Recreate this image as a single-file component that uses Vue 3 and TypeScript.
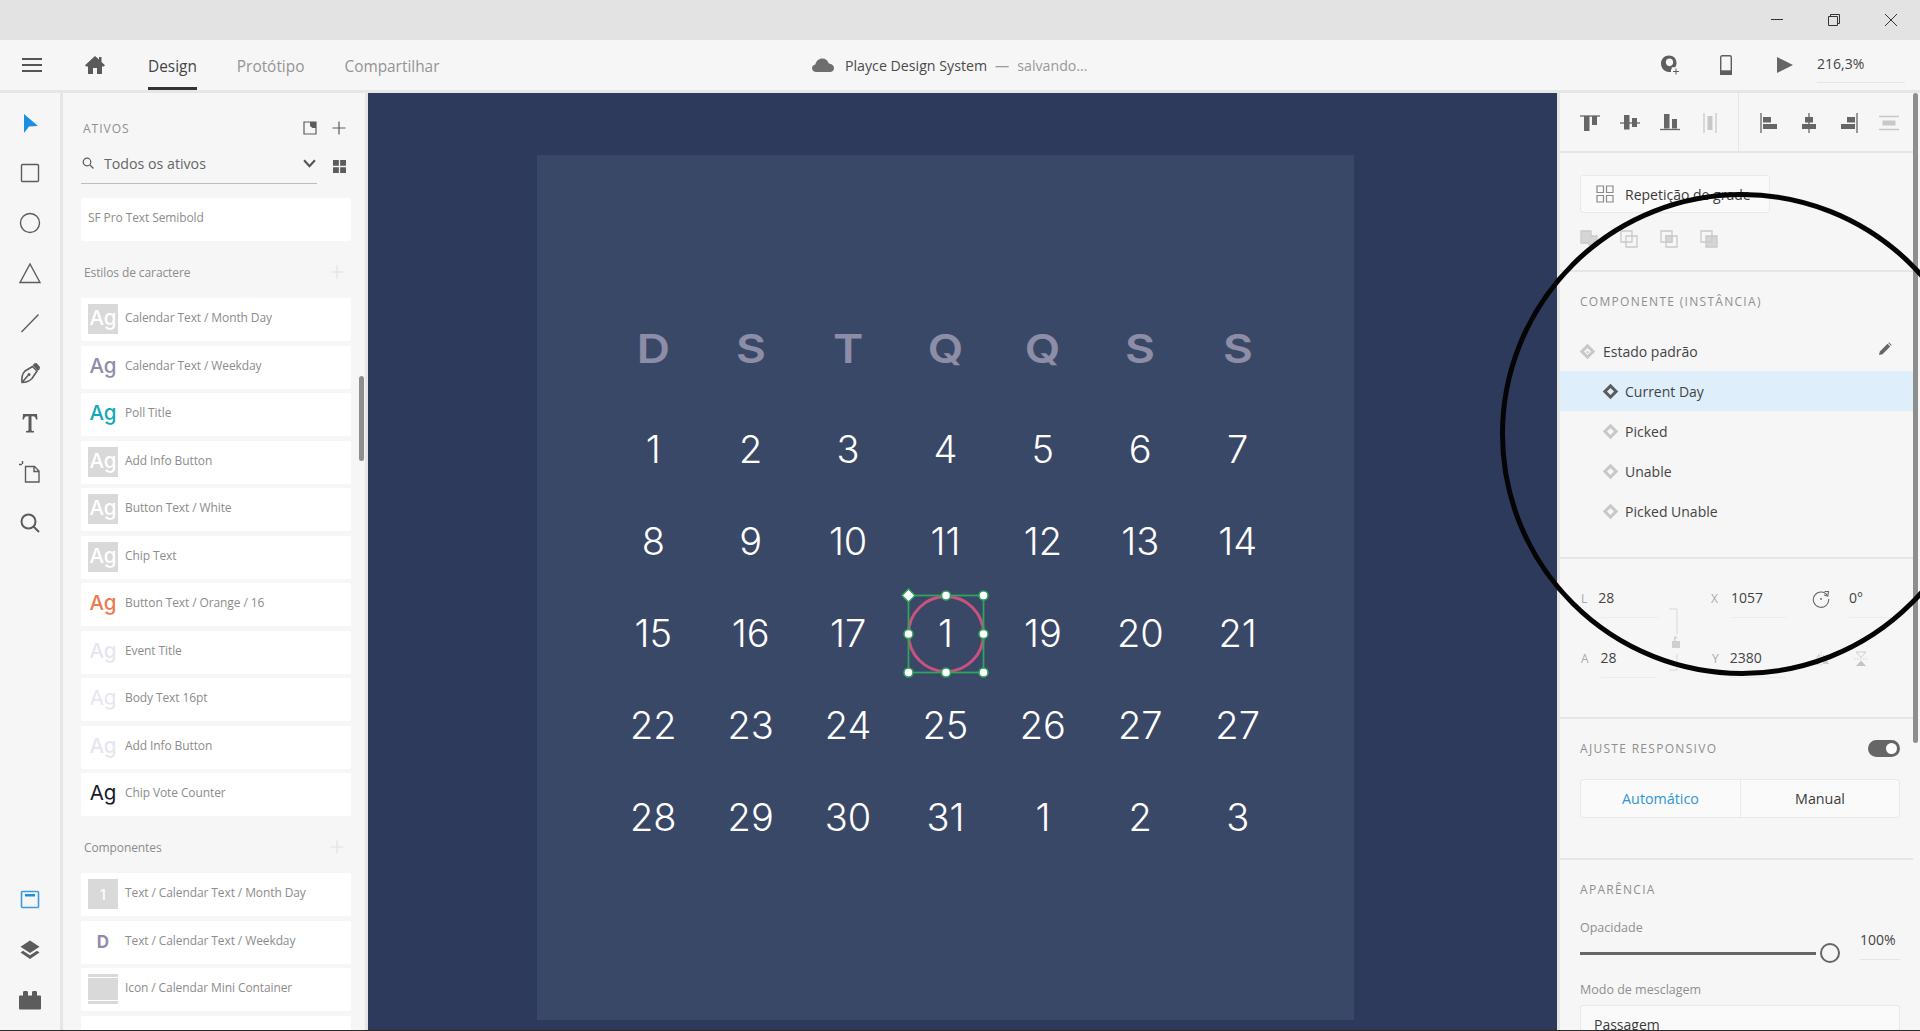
<template>
  <div class="app">
    <div class="titlebar">
      <svg class="win" viewBox="0 0 14 14"><path d="M1 6.500H13" /></svg>
      <svg class="win" viewBox="0 0 14 14"><path d="M1.500 3.500H10.500V12.500H1.500ZM3.500 3.500V1.500H12.500V10.500H10.500" /></svg>
      <svg class="win" viewBox="0 0 14 14"><path d="M1 1L13 13M13 1L1 13" /></svg>
    </div>

    <header class="toolbar">
      <div class="toolbar-left">
        <svg class="menu-icon" viewBox="0 0 20 16"><path d="M0 2H20M0 8H20M0 14H20" /></svg>
        <svg class="home-icon" viewBox="0 0 20 20"><path d="M10 1L14 4.600V2H16.500V6.900L20 10.200L18.700 11.400H17V19H12V13H8V19H3V11.400H1.300L0 10.200Z" /></svg>
        <nav class="tabs">
          <span class="tab tab-active">Design</span>
          <span class="tab">Protótipo</span>
          <span class="tab">Compartilhar</span>
        </nav>
      </div>
      <div class="doc">
        <svg class="cloud" viewBox="0 0 22 14"><path d="M4.500 14C2 14 0 12.400 0 10.200C0 8.300 1.400 6.800 3.300 6.500C4.200 2.800 7 0.500 10.400 0.500C13.500 0.500 16 2.500 16.800 5.500C19.800 5.700 22 7.600 22 10.200C22 12.400 20.300 14 18 14Z" /></svg>
        <span class="doc-name">Playce Design System</span>
        <span class="doc-dash">—</span>
        <span class="doc-state">salvando...</span>
      </div>
      <div class="toolbar-right">
        <svg class="user-icon" viewBox="0 0 20 20"><path fill-rule="evenodd" d="M9 0.500C13.500 0.500 16.500 3.500 16.500 8C16.500 9.500 16 11 15.200 12.200H11.800V13.500C11 14.300 10.800 15.500 11 17H9C4.500 17 1 13 1 8.500C1 4 4.500 0.500 9 0.500ZM9.500 3.500C7.300 3.500 5.800 5.200 5.800 7.300C5.800 9.500 7.300 11.200 9.500 11.200C11.700 11.200 13.200 9.500 13.200 7.300C13.200 5.200 11.700 3.500 9.500 3.500Z" /><path class="plus" d="M16 13.500V19.500M13 16.500H19" /></svg>
        <svg class="phone-icon" viewBox="0 0 12 20"><rect x="0.700" y="0.700" width="10.600" height="18.600" rx="1.500" /><rect class="phone-bottom" x="0.700" y="16" width="10.600" height="3.300" /></svg>
        <svg class="play-icon" viewBox="0 0 16 16"><path d="M0 0L16 8L0 16Z" /></svg>
        <span class="zoom-value">216,3%</span>
      </div>
    </header>

    <main class="workspace">
      <aside class="rail">
        <div class="rail-group">
          <span class="rail-item"><svg viewBox="0 0 24 24"><path class="fill-blue" d="M6 3L20 15L11 15.600L6 22Z" /></svg></span>
          <span class="rail-item"><svg viewBox="0 0 24 24"><rect class="line" x="3.500" y="3.500" width="17" height="17" rx="1" /></svg></span>
          <span class="rail-item"><svg viewBox="0 0 24 24"><circle class="line" cx="12" cy="12" r="9.500" /></svg></span>
          <span class="rail-item"><svg viewBox="0 0 24 24"><path class="line" d="M12 3L22 21.500H2Z" /></svg></span>
          <span class="rail-item"><svg viewBox="0 0 24 24"><path class="line" d="M3.500 21L20.500 3.500" /></svg></span>
          <span class="rail-item"><svg viewBox="0 0 24 24"><path class="line thick" d="M4 21.500C3.500 17 4.500 12.500 7 10L14.500 5.500L19 10L14 17.500C11.500 20 8 21.500 4 21.500ZM4 21.500L10 14.500" /><path class="fill-dark" d="M16 2.500L18.500 2L22 6L21.500 8.500L19.800 9.800L14.800 4.300Z" /><circle class="fill-dark" cx="11" cy="13.500" r="1.500" /></svg></span>
          <span class="rail-item"><svg viewBox="0 0 24 24"><path class="fill-dark" d="M5 3H19L19.500 8.500H18C17.500 6 17 5.300 14.800 5.300H13.500V18.500C13.500 19.500 14 20 16 20V21.500H8V20C10 20 10.500 19.500 10.500 18.500V5.300H9.200C7 5.300 6.500 6 6 8.500H4.500Z" /></svg></span>
          <span class="rail-item"><svg viewBox="0 0 24 24"><path class="line" d="M7.500 5.500H16.500L21 10V21H7.500Z M16 6V10.500H20.500" /><path class="line" d="M1 3.500H4M4.500 0V3" /></svg></span>
          <span class="rail-item"><svg viewBox="0 0 24 24"><circle class="line wide" cx="10.500" cy="10.500" r="7" /><path class="line wide" d="M15.500 15.500L21 21" /></svg></span>
        </div>
        <div class="rail-group rail-bottom">
          <span class="rail-item"><svg viewBox="0 0 24 24"><rect class="line-blue" x="3.500" y="3.500" width="17" height="16" rx="1" /><rect class="fill-blue" x="7" y="6" width="10" height="2.500" /></svg></span>
          <span class="rail-item"><svg viewBox="0 0 24 24"><path class="fill-dark" d="M12 2.500L21.500 8.800L12 15L2.500 8.800Z" /><path class="fill-dark" d="M5 12.700L12 17.300L19 12.700L21.500 14.500L12 21L2.500 14.500Z" /></svg></span>
          <span class="rail-item"><svg viewBox="0 0 24 24"><path class="fill-dark" d="M1 8.500C1 7.800 1.500 7.500 2 7.500H5V4.500C5 3.500 5.500 3 6.500 3H8.500C9.500 3 10 3.500 10 4.500V7.500H14V4.500C14 3.500 14.500 3 15.500 3H17.500C18.500 3 19 3.500 19 4.500V7.500H22C22.500 7.500 23 7.800 23 8.500V20.500C23 21 22.500 21.500 22 21.500H2C1.500 21.500 1 21 1 20.500Z" /></svg></span>
        </div>
      </aside>

      <section class="assets">
        <div class="assets-head">
          <span class="caps assets-title">ATIVOS</span>
          <span class="head-icons">
            <svg viewBox="0 0 14 14"><path class="line-sm" d="M1 1H13V13H1Z" /><path class="fill-dark" d="M7 1H13V7H9.500L7 5Z" /></svg>
            <svg viewBox="0 0 14 14"><path class="line-sm" d="M7 0.500V13.500M0.500 7H13.500" /></svg>
          </span>
        </div>
        <div class="assets-search">
          <div class="search-box">
            <svg class="search-glass" viewBox="0 0 12 12"><circle class="line-sm" cx="5" cy="5" r="3.800" /><path class="line-sm" d="M8 8L11.500 11.500" /></svg>
            <span class="search-text">Todos os ativos</span>
            <svg class="chevron" viewBox="0 0 12 8"><path d="M1 1L6 6.500L11 1" /></svg>
          </div>
          <svg class="grid-icon" viewBox="0 0 12 12"><path d="M0 0H5.400V5.400H0ZM6.600 0H12V5.400H6.600ZM0 6.600H5.400V12H0ZM6.600 6.600H12V12H6.600Z" /></svg>
        </div>
        <div class="card card-font">SF Pro Text Semibold</div>

        <div class="group-label">
          <span>Estilos de caractere</span>
          <svg viewBox="0 0 14 14"><path d="M7 0.500V13.500M0.500 7H13.500" /></svg>
        </div>
        <div class="card-list">
          <div v-for="item in charStyles" :key="item.name + item.thumb" class="card">
            <span class="thumb" :class="item.thumb">Ag</span>
            <span class="card-name">{{ item.name }}</span>
          </div>
        </div>

        <div class="group-label">
          <span>Componentes</span>
          <svg viewBox="0 0 14 14"><path d="M7 0.500V13.500M0.500 7H13.500" /></svg>
        </div>
        <div class="card-list">
          <div class="card">
            <span class="thumb boxed one">1</span>
            <span class="card-name">Text / Calendar Text / Month Day</span>
          </div>
          <div class="card">
            <span class="thumb letter">D</span>
            <span class="card-name">Text / Calendar Text / Weekday</span>
          </div>
          <div class="card">
            <span class="thumb mini"></span>
            <span class="card-name">Icon / Calendar Mini Container</span>
          </div>
          <div class="card"></div>
        </div>
        <span class="scroll scroll-left"></span>
      </section>

      <section class="canvas">
        <div class="artboard">
          <div class="calendar">
            <span v-for="(d, i) in weekdays" :key="'w' + i" class="cell weekday"><b>{{ d }}</b></span>
            <span v-for="(d, i) in days" :key="'d' + i" class="cell day">
              {{ d }}
              <svg v-if="i === 17" class="selection" viewBox="0 0 100 100">
                <circle class="sel-circle" cx="50" cy="50" r="37.500" />
                <rect class="sel-box" x="12.500" y="11.500" width="75" height="77" />
                <path class="sel-handle" d="M12.500 5L19 11.500L12.500 18L6 11.500Z" />
                <circle v-for="(h, k) in handles" :key="k" class="sel-handle" :cx="h[0]" :cy="h[1]" r="4.500" />
              </svg>
            </span>
          </div>
        </div>
      </section>

      <aside class="props">
        <div class="section align-bar">
          <div class="align-group">
            <svg viewBox="0 0 20 20"><path class="stroke" d="M0 3H20" /><path class="solid" d="M4 3H9.500V18H4ZM12 3H17V12H12Z" /></svg>
            <svg viewBox="0 0 20 20"><path class="stroke" d="M0 10H20" /><path class="solid" d="M4 2H9.500V16.500H4ZM12 5H17V14H12Z" /></svg>
            <svg viewBox="0 0 20 20"><path class="stroke" d="M0 16.500H20" /><path class="solid" d="M4 1H9.500V15.500H4ZM12 6H17V15.500H12Z" /></svg>
            <svg viewBox="0 0 20 20"><path class="stroke dim" d="M4 0V20M16 0V20" /><path class="solid dim" d="M7.500 3H12.500V17H7.500Z" /></svg>
          </div>
          <div class="align-group align-right">
            <svg viewBox="0 0 20 20"><path class="stroke" d="M2 0V20" /><path class="solid" d="M4 4H12V9.500H4ZM4 11H18V16H4Z" /></svg>
            <svg viewBox="0 0 20 20"><path class="stroke" d="M10 0V20" /><path class="solid" d="M6 4H14V9.500H6ZM3 11H17V16H3Z" /></svg>
            <svg viewBox="0 0 20 20"><path class="stroke" d="M18 0V20" /><path class="solid" d="M8 4H16V9.500H8ZM2 11H16V16H2Z" /></svg>
            <svg viewBox="0 0 20 20"><path class="stroke dim" d="M0 3.500H20M0 16.500H20" /><path class="solid dim" d="M3.500 7.500H16.500V12.500H3.500Z" /></svg>
          </div>
        </div>

        <div class="section repeat">
          <div class="repeat-btn">
            <svg viewBox="0 0 18 18"><path d="M1 1H7.500V7.500H1ZM10.500 1H17V7.500H10.500ZM1 10.500H7.500V17H1ZM10.500 10.500H17V17H10.500Z" /></svg>
            <span>Repetição de grade</span>
          </div>
          <div class="bool-row">
            <svg viewBox="0 0 18 18"><path class="bool-fill" d="M1 1H11V6H17V13L11 17L8 13H1Z" /></svg>
            <svg viewBox="0 0 18 18"><path d="M1 1H12V12H1Z" /><path d="M6 6H17V17H6Z" /></svg>
            <svg viewBox="0 0 18 18"><path d="M1 1H12V12H1Z" /><path d="M6 6H17V17H6Z" /><path class="bool-fill" d="M6 6H12V12H6Z" /></svg>
            <svg viewBox="0 0 18 18"><path class="bool-fill" d="M6 6H17V17H6Z" /><path d="M1 1H12V12H1Z" /></svg>
          </div>
        </div>

        <div class="section component">
          <div class="caps section-title">COMPONENTE (INSTÂNCIA)</div>
          <div class="states">
            <div v-for="(s, i) in states" :key="s" class="state" :class="{ 'state-root': i === 0, 'state-current': i === 1 }">
              <span class="state-diamond"></span>
              <span>{{ s }}</span>
              <svg v-if="i === 0" class="pencil" viewBox="0 0 14 14"><path d="M1 13L1.800 9.500L9.500 1.800L12.200 4.500L4.500 12.200Z M10.300 1L11 0.300L13.700 3L13 3.700Z" /></svg>
            </div>
          </div>
        </div>

        <div class="section transform">
          <div class="field field-w"><span class="f-label">L</span><span class="f-value">28</span></div>
          <div class="field field-x"><span class="f-label">X</span><span class="f-value">1057</span></div>
          <div class="field-rot">
            <svg viewBox="0 0 18 18"><path d="M15.500 5.500A7.700 7.700 0 1 0 16.700 9" /><path d="M12.500 1.500L16.500 1.500L15.800 6L12 5" /><circle class="dot" cx="9" cy="9" r="0.900" /></svg>
            <span class="f-value">0°</span>
          </div>
          <div class="field field-h"><span class="f-label">A</span><span class="f-value">28</span></div>
          <div class="field field-y"><span class="f-label">Y</span><span class="f-value">2380</span></div>
          <div class="field-flip">
            <svg viewBox="0 0 18 18"><path d="M9 2V16" class="dash" /><path d="M7 4V14L1 14Z" class="flip-a" /><path d="M11 4V14L17 14Z" class="flip-b" /></svg>
            <svg viewBox="0 0 18 18"><path d="M2 9H16" class="dash" /><path d="M4 2H14L9 7.500Z" class="flip-a" /><path d="M4 16H14L9 10.500Z" class="flip-c" /></svg>
          </div>
          <svg class="link" viewBox="0 0 12 64"><path d="M1 1H9V26M9 46V62H1" /><path class="lock" d="M4 33H12V40H4ZM6 33V30C6 28 9 28 9.500 29.500L8 30.500C8 30 7.500 30 7.500 31V33Z" /></svg>
        </div>

        <div class="section responsive">
          <div class="section-head">
            <span class="caps">AJUSTE RESPONSIVO</span>
            <span class="toggle"><i></i></span>
          </div>
          <div class="segment">
            <span class="seg-on">Automático</span>
            <span>Manual</span>
          </div>
        </div>

        <div class="section appearance">
          <div class="caps section-title">APARÊNCIA</div>
          <div class="opacity">
            <span class="sub-label">Opacidade</span>
            <span class="opacity-value">100%</span>
            <span class="slider"><i class="slider-track"></i><i class="slider-knob"></i></span>
          </div>
          <div class="sub-label blend-label">Modo de mesclagem</div>
          <div class="select">Passagem</div>
        </div>
        <span class="scroll scroll-right"></span>
      </aside>
    </main>
    <div class="edge"></div>

    <svg class="annotation" viewBox="0 0 484 484"><circle cx="242" cy="242" r="239.500" /></svg>
  </div>
</template>

<script setup lang="ts">
interface CharStyle {
  name: string
  thumb: string
}

const charStyles: CharStyle[] = [
  { name: 'Calendar Text / Month Day', thumb: 'boxed' },
  { name: 'Calendar Text / Weekday', thumb: 'purple' },
  { name: 'Poll Title', thumb: 'teal' },
  { name: 'Add Info Button', thumb: 'boxed' },
  { name: 'Button Text / White', thumb: 'boxed' },
  { name: 'Chip Text', thumb: 'boxed' },
  { name: 'Button Text / Orange / 16', thumb: 'orange' },
  { name: 'Event Title', thumb: 'pale' },
  { name: 'Body Text 16pt', thumb: 'pale thin' },
  { name: 'Add Info Button', thumb: 'pale' },
  { name: 'Chip Vote Counter', thumb: 'ink' },
]

const weekdays = ['D', 'S', 'T', 'Q', 'Q', 'S', 'S']

const days: number[] = [
  1, 2, 3, 4, 5, 6, 7,
  8, 9, 10, 11, 12, 13, 14,
  15, 16, 17, 1, 19, 20, 21,
  22, 23, 24, 25, 26, 27, 27,
  28, 29, 30, 31, 1, 2, 3,
]

const handles: [number, number][] = [
  [50, 11.5], [87.5, 11.5],
  [12.5, 50], [87.5, 50],
  [12.5, 88.5], [50, 88.5], [87.5, 88.5],
]

const states = ['Estado padrão', 'Current Day', 'Picked', 'Unable', 'Picked Unable']
</script>

<style>
html, body {
  margin: 0;
  overflow: hidden;
}
</style>

<style scoped>
.app {
  position: relative;
  display: flex;
  flex-direction: column;
  width: 1920px;
  height: 1031px;
  overflow: hidden;
  background: #f6f6f6;
  font-family: "Open Sans", "Noto Sans", sans-serif;
  color: #555;
}

/* title bar */
.titlebar {
  flex: 0 0 40px;
  display: flex;
  justify-content: flex-end;
  align-items: center;
  gap: 43px;
  padding-right: 22px;
  background: #e3e3e3;
}
.win {
  width: 14px;
  height: 14px;
  fill: none;
  stroke: #333;
  stroke-width: 1;
}

/* top toolbar */
.toolbar {
  flex: 0 0 53px;
  box-sizing: border-box;
  display: flex;
  align-items: center;
  background: #f6f6f6;
  border-bottom: 3px solid #e6e6e6;
}
.toolbar-left {
  flex: 0 0 812px;
  display: flex;
  align-items: center;
  height: 50px;
}
.menu-icon {
  width: 20px;
  height: 16px;
  margin-left: 22px;
  fill: none;
  stroke: #555;
  stroke-width: 2.2;
}
.home-icon {
  width: 20px;
  height: 20px;
  margin-left: 43px;
  fill: #5a5a5a;
}
.tabs {
  display: flex;
  align-self: stretch;
  gap: 40px;
  margin-left: 43px;
}
.tab {
  height: 47px;
  line-height: 54px;
  font-size: 15.400px;
  color: #949494;
}
.tab-active {
  color: #444;
  border-bottom: 3px solid #333;
}
.doc {
  flex: 1;
  display: flex;
  align-items: center;
  font-size: 14.200px;
}
.cloud {
  width: 22px;
  height: 14px;
  margin-right: 11px;
  fill: #6e6e6e;
}
.doc-name {
  color: #4a4a4a;
}
.doc-dash {
  margin: 0 8px;
  color: #999;
}
.doc-state {
  color: #999;
}
.toolbar-right {
  flex: 0 0 260px;
  display: flex;
  align-items: center;
}
.user-icon {
  width: 20px;
  height: 20px;
  fill: #5e5e5e;
}
.user-icon .plus {
  fill: none;
  stroke: #5e5e5e;
  stroke-width: 1;
}
.phone-icon {
  width: 12px;
  height: 20px;
  margin-left: 40px;
  fill: none;
  stroke: #5e5e5e;
  stroke-width: 1.4;
}
.phone-bottom {
  fill: #5e5e5e;
}
.play-icon {
  width: 16px;
  height: 16px;
  margin-left: 45px;
  fill: #666;
}
.zoom-value {
  width: 88px;
  margin-left: 24px;
  padding-bottom: 10px;
  margin-top: 8px;
  font-size: 14px;
  line-height: 17px;
  color: #444;
  border-bottom: 1px solid #e6e6e6;
}

.workspace {
  flex: 1;
  display: flex;
  min-height: 0;
}

/* left tools */
.rail {
  flex: 0 0 60px;
  display: flex;
  flex-direction: column;
  justify-content: space-between;
  padding: 5px 0 5px;
  background: #f6f6f6;
  border-right: 3px solid #e5e5e5;
}
.rail-item {
  display: flex;
  align-items: center;
  justify-content: center;
  height: 50px;
}
.rail-item svg {
  width: 24px;
  height: 24px;
}
.fill-blue {
  fill: #1b8fe0;
}
.fill-dark {
  fill: #5c5c5c;
}
.line {
  fill: none;
  stroke: #5c5c5c;
  stroke-width: 1.4;
}
.line.thick {
  stroke-width: 1.6;
}
.line.wide {
  stroke-width: 2;
}
.line-blue {
  fill: none;
  stroke: #3d9bdc;
  stroke-width: 1.6;
}
.line-sm {
  fill: none;
  stroke: #5c5c5c;
  stroke-width: 1.2;
}

/* assets panel */
.assets {
  position: relative;
  flex: 0 0 305px;
  box-sizing: border-box;
  padding-left: 18px;
  overflow: hidden;
  background: #f6f6f6;
  border-right: 3px solid #e5e5e5;
}
.assets-head {
  display: flex;
  align-items: center;
  justify-content: space-between;
  width: 270px;
  height: 20px;
  margin-top: 25px;
  padding-left: 2px;
  box-sizing: border-box;
}
.caps {
  font-size: 12px;
  letter-spacing: 1.3px;
  color: #8f8f8f;
}
.assets-title {
  letter-spacing: 1px;
}
.head-icons {
  display: flex;
  gap: 15px;
  margin-right: 5px;
}
.head-icons svg {
  width: 14px;
  height: 14px;
}
.assets-search {
  display: flex;
  align-items: flex-start;
  margin-top: 10px;
}
.search-box {
  box-sizing: border-box;
  display: flex;
  align-items: center;
  width: 236px;
  height: 36px;
  padding: 0 1px 5px 1px;
  border-bottom: 1px solid #bdbdbd;
}
.search-glass {
  width: 12px;
  height: 12px;
}
.search-text {
  flex: 1;
  margin-left: 10px;
  font-size: 14.200px;
  color: #666;
}
.chevron {
  width: 13px;
  height: 9px;
  fill: none;
  stroke: #555;
  stroke-width: 2;
}
.grid-icon {
  width: 13px;
  height: 13px;
  margin: 12px 0 0 16px;
  fill: #5c5c5c;
}
.card {
  box-sizing: border-box;
  display: flex;
  align-items: flex-start;
  flex: 0 0 43px;
  width: 270px;
  height: 43px;
  padding: 6px 0 0 7px;
  border-radius: 2px;
  background: #fff;
}
.card-font {
  margin-top: 14px;
  font-size: 12px;
  line-height: 28px;
  letter-spacing: -0.1px;
  color: #8c8c8c;
}
.group-label {
  display: flex;
  align-items: center;
  justify-content: space-between;
  box-sizing: border-box;
  width: 270px;
  height: 57px;
  padding: 21px 7px 16px 3px;
  font-size: 12px;
  letter-spacing: -0.1px;
  color: #8c8c8c;
}
.group-label svg {
  width: 14px;
  height: 14px;
  fill: none;
  stroke: #e2e2e2;
  stroke-width: 1.2;
}
.card-list {
  display: flex;
  flex-direction: column;
  gap: 4.500px;
}
.thumb {
  flex: 0 0 30px;
  box-sizing: border-box;
  width: 30px;
  height: 30px;
  padding-bottom: 3px;
  display: flex;
  align-items: center;
  justify-content: center;
  font-family: Inter, "Open Sans", sans-serif;
  font-size: 20.500px;
  font-weight: 500;
}
.boxed {
  background: #d9d9d9;
  color: #fff;
}
.boxed.one {
  padding-bottom: 0;
  font-size: 14px;
}
.purple,
.letter {
  color: #8f8ca8;
}
.letter {
  padding-bottom: 0;
  font-weight: 700;
  font-size: 17px;
}
.teal {
  color: #12a8ba;
}
.orange {
  color: #ee7a50;
}
.pale {
  color: #e6e6f2;
}
.pale.thin {
  font-weight: 400;
}
.ink {
  color: #15192e;
  font-weight: 400;
}
.mini {
  background: linear-gradient(#d9d9d9 0 3px, #fff 3px 4px, #d9d9d9 4px 26px, #fff 26px 27px, #d9d9d9 27px);
}
.card-name {
  margin-left: 7px;
  font-size: 12px;
  line-height: 28px;
  letter-spacing: -0.1px;
  color: #8c8c8c;
}
.scroll {
  position: absolute;
  width: 5px;
  border-radius: 3px;
  background: #8e8e8e;
}
.scroll-left {
  top: 283px;
  left: 296px;
  height: 85px;
}
.scroll-right {
  top: 0;
  right: 2px;
  height: 650px;
}

/* canvas */
.canvas {
  flex: 1;
  min-width: 0;
  padding: 62px 0 0 169px;
  background: #2d3a5c;
  overflow: hidden;
}
.artboard {
  box-sizing: border-box;
  width: 817px;
  height: 865px;
  padding-top: 147px;
  background: #3a4868;
}
.calendar {
  display: grid;
  grid-template-columns: repeat(7, 97.400px);
  grid-template-rows: 101px;
  grid-auto-rows: 92px;
  justify-content: center;
}
.cell {
  position: relative;
  display: flex;
  align-items: center;
  justify-content: center;
  font-family: Inter, "Open Sans", sans-serif;
}
.weekday {
  padding-bottom: 9px;
  font-size: 40px;
  color: #8e8da8;
}
.weekday b {
  font-weight: 600;
  transform: scaleX(1.15);
}
.day {
  font-size: 38px;
  font-weight: 300;
  color: #fff;
}
.selection {
  position: absolute;
  left: -1.300px;
  top: -3px;
  width: 100px;
  height: 100px;
  overflow: visible;
}
.sel-circle {
  fill: none;
  stroke: #c9527e;
  stroke-width: 3;
}
.sel-box {
  fill: none;
  stroke: #2fa45a;
  stroke-width: 1.800;
}
.sel-handle {
  fill: #fff;
  stroke: #2fa45a;
  stroke-width: 1.500;
}

/* right panel */
.props {
  position: relative;
  flex: 0 0 363px;
  box-sizing: border-box;
  background: #f6f6f6;
  border-left: 3px solid #e5e5e5;
}
.section {
  box-sizing: border-box;
  width: 353px;
  border-bottom: 2px solid #e6e6e6;
}
.align-bar {
  display: flex;
  height: 60px;
}
.align-group {
  display: flex;
  align-items: center;
  gap: 20px;
  padding: 2px 0 0 20px;
  width: 179px;
  box-sizing: border-box;
  border-right: 1px solid #e6e6e6;
}
.align-right {
  border-right: none;
  width: auto;
}
.align-group svg {
  width: 20px;
  height: 20px;
}
.stroke {
  fill: none;
  stroke: #666;
  stroke-width: 1.300;
}
.solid {
  fill: #666;
}
.stroke.dim {
  stroke: #c8c8c8;
}
.solid.dim {
  fill: #c8c8c8;
}
.repeat {
  height: 119px;
  padding: 22px 0 0 20px;
}
.repeat-btn {
  box-sizing: border-box;
  display: flex;
  align-items: center;
  width: 190px;
  height: 38px;
  padding-left: 15px;
  border: 1px solid #e9e9e9;
  border-radius: 3px;
  background: #fafafa;
  font-size: 14px;
  color: #3a3a3a;
}
.repeat-btn svg {
  width: 18px;
  height: 18px;
  margin-right: 11px;
  fill: none;
  stroke: #8a8a8a;
  stroke-width: 1.200;
}
.bool-row {
  display: flex;
  gap: 22px;
  margin-top: 17px;
}
.bool-row svg {
  width: 18px;
  height: 18px;
  fill: none;
  stroke: #c9c9c9;
  stroke-width: 1.300;
}
.bool-fill {
  fill: #d6d6d6;
}
.component {
  height: 287px;
}
.section-title {
  padding: 20px 0 0 20px;
  line-height: 20px;
}
.states {
  margin-top: 19px;
}
.state {
  display: flex;
  align-items: center;
  height: 40px;
  padding-left: 45px;
  font-size: 14px;
  color: #444;
}
.state-root {
  padding-left: 22px;
}
.state-current {
  background: #deeefa;
}
.state-diamond {
  position: relative;
  flex: none;
  box-sizing: border-box;
  width: 11px;
  height: 11px;
  margin-right: 9px;
  border: 3px solid #c8c8c8;
  transform: rotate(45deg);
}
.state-root .state-diamond {
  margin-right: 10px;
}
.state-root .state-diamond::after {
  content: '';
  position: absolute;
  inset: 1.500px;
  background: #c8c8c8;
}
.state-current .state-diamond {
  border-color: #5c5c5c;
}
.pencil {
  width: 14px;
  height: 14px;
  margin-left: auto;
  margin-right: 21px;
  margin-top: -4px;
  fill: #666;
}
.transform {
  position: relative;
  display: grid;
  grid-template-columns: 130px 101px 1fr;
  grid-template-rows: 39px 39px;
  row-gap: 21px;
  align-content: start;
  height: 160px;
  padding: 20px 0 0 21px;
}
.field {
  display: flex;
  align-items: center;
  font-size: 14px;
  color: #444;
}
.field-rot,
.field-flip {
  display: flex;
  align-items: center;
}
.f-label {
  font-size: 12px;
  color: #aaa;
}
.f-value {
  height: 38px;
  line-height: 38px;
  border-bottom: 1px solid #ececec;
  font-size: 14px;
  color: #444;
}
.field-w .f-value {
  width: 60px;
  margin-left: 11px;
}
.field-h .f-value {
  width: 56px;
  margin-left: 12px;
}
.field-x .f-value,
.field-y .f-value {
  width: 56px;
  margin-left: 13px;
}
.field-y .f-label {
  margin-left: 1px;
}
.field-y .f-value {
  margin-left: 11px;
}
.field-rot svg {
  width: 18px;
  height: 18px;
  fill: none;
  stroke: #666;
  stroke-width: 1.100;
}
.field-rot .dot {
  fill: #666;
  stroke: none;
}
.field-rot .f-value {
  width: 42px;
  margin-left: 19px;
}
.field-flip {
  gap: 22px;
}
.field-flip svg {
  width: 18px;
  height: 18px;
}
.dash {
  fill: none;
  stroke: #d0d0d0;
  stroke-width: 1;
  stroke-dasharray: 1.500 1.500;
}
.flip-a {
  fill: none;
  stroke: #cfcfcf;
}
.flip-b {
  fill: #cfcfcf;
}
.flip-c {
  fill: #c4c4c4;
}
.link {
  position: absolute;
  left: 108px;
  top: 49px;
  width: 12px;
  height: 64px;
  fill: none;
  stroke: #d8d8d8;
  stroke-width: 1;
  overflow: visible;
}
.link .lock {
  fill: #cfcfcf;
  stroke: none;
}
.responsive {
  height: 141px;
  padding: 19px 13px 0 20px;
}
.section-head {
  display: flex;
  align-items: center;
  justify-content: space-between;
  height: 20px;
}
.toggle {
  position: relative;
  width: 32px;
  height: 17px;
  border-radius: 9px;
  background: #666;
}
.toggle i {
  position: absolute;
  top: 3px;
  right: 3px;
  width: 11px;
  height: 11px;
  border-radius: 50%;
  background: #fff;
}
.segment {
  box-sizing: border-box;
  display: grid;
  grid-template-columns: 1fr 1fr;
  height: 39px;
  margin-top: 21px;
  border: 1px solid #e9e9e9;
  border-radius: 3px;
  background: #fafafa;
  font-size: 14.300px;
  line-height: 38px;
  text-align: center;
  color: #3a3a3a;
}
.segment span + span {
  border-left: 1px solid #e9e9e9;
}
.seg-on {
  color: #2d96d8;
}
.appearance {
  height: 200px;
  border-bottom: none;
}
.appearance .section-title {
  padding-top: 20px;
}
.opacity {
  display: grid;
  grid-template-columns: 280px 40px;
  grid-template-rows: 20px 30px;
  margin: 18px 0 0 20px;
}
.sub-label {
  font-size: 12.500px;
  line-height: 20px;
  color: #8f8f8f;
}
.opacity-value {
  grid-column: 2;
  grid-row: 1 / 3;
  align-self: start;
  height: 38px;
  line-height: 36px;
  margin-top: 4px;
  box-sizing: border-box;
  border-bottom: 1px solid #e6e6e6;
  font-size: 14px;
  color: #444;
}
.slider {
  grid-column: 1;
  grid-row: 2;
  display: flex;
  align-items: center;
}
.slider-track {
  width: 236px;
  height: 3px;
  background: #666;
}
.slider-knob {
  box-sizing: border-box;
  width: 20px;
  height: 20px;
  margin-left: 4px;
  border: 2.500px solid #666;
  border-radius: 50%;
  background: #f6f6f6;
}
.blend-label {
  margin: 12px 0 0 20px;
}
.select {
  box-sizing: border-box;
  width: 320px;
  height: 40px;
  margin: 5px 0 0 20px;
  padding-left: 13px;
  border: 1px solid #e9e9e9;
  border-radius: 3px;
  background: #fafafa;
  font-size: 14px;
  line-height: 38px;
  color: #3a3a3a;
}

.edge {
  flex: 0 0 1px;
  background: #2b2b2b;
  z-index: 1;
}

/* hand drawn circle over the screenshot */
.annotation {
  position: absolute;
  left: 1500px;
  top: 192px;
  width: 484px;
  height: 484px;
  fill: none;
  stroke: #050505;
  stroke-width: 5;
  pointer-events: none;
}
</style>
